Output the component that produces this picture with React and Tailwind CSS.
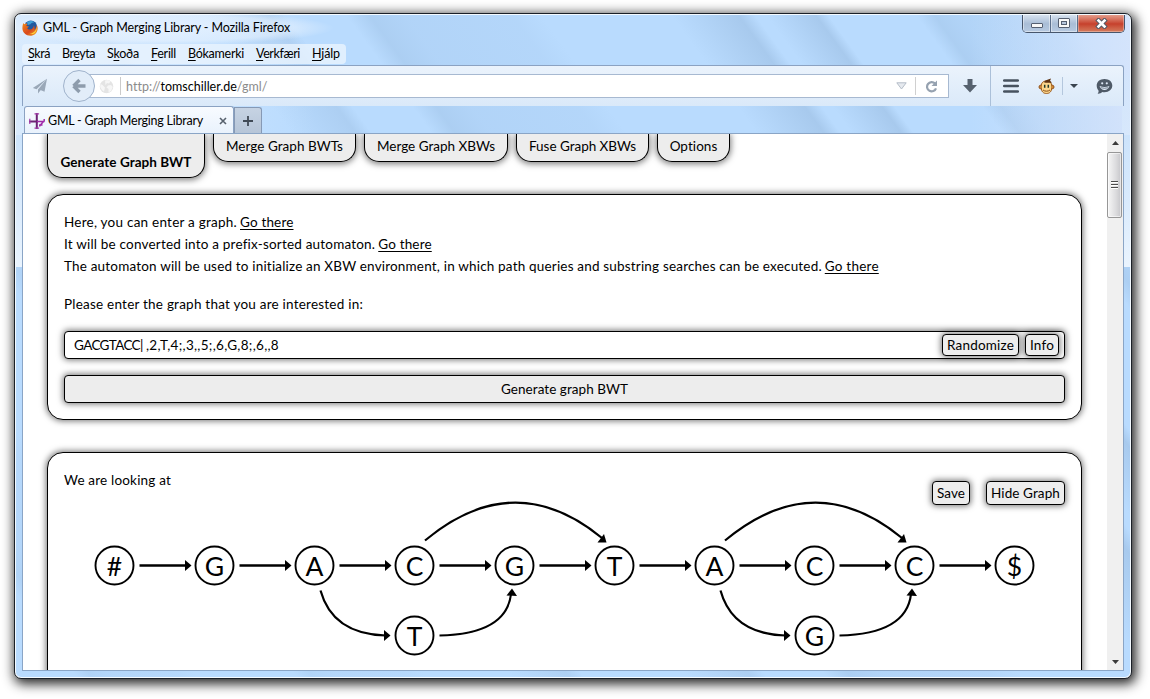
import React, { useLayoutEffect, useRef, useState } from "react";

/* Single line of text tracked to an exact width in pixels. */
function Fit({ w, className = "", children }) {
  const ref = useRef(null);
  const [spacing, setSpacing] = useState(0);
  useLayoutEffect(() => {
    const el = ref.current;
    const natural = el.getBoundingClientRect().width;
    setSpacing((w - natural) / el.textContent.length);
  }, [w]);
  return (
    <span ref={ref} className={"inline-block whitespace-nowrap " + className} style={{ letterSpacing: spacing + "px" }}>
      {children}
    </span>
  );
}

function Glass() {
  return (
    <svg className="absolute inset-0" width="1114" height="662" viewBox="0 0 1114 662">
      <defs>
        <linearGradient id="fadeRight"><stop offset="0" stopColor="#a3c6ea" stopOpacity="0" /><stop offset="0.12" stopColor="#a3c6ea" stopOpacity="0.6" /><stop offset="0.3" stopColor="#a8cbf0" stopOpacity="0.45" /><stop offset="0.85" stopColor="#a8cbf0" stopOpacity="0.3" /><stop offset="1" stopColor="#a8cbf0" stopOpacity="0" /></linearGradient>
        <linearGradient id="fadeLeft"><stop offset="0" stopColor="#a0c2e6" stopOpacity="0" /><stop offset="0.8" stopColor="#a0c2e6" stopOpacity="0.7" /><stop offset="1" stopColor="#a0c2e6" stopOpacity="0" /></linearGradient>
        <linearGradient id="lightLeft"><stop offset="0" stopColor="#e4f0fd" stopOpacity="0.75" /><stop offset="1" stopColor="#e4f0fd" stopOpacity="0" /></linearGradient>
        <linearGradient id="lightRight"><stop offset="0" stopColor="#dbe6fb" stopOpacity="0" /><stop offset="1" stopColor="#dbe6fb" stopOpacity="0.8" /></linearGradient>
        <linearGradient id="side" x2="0" y2="1"><stop offset="0" stopColor="#d2e6fb" stopOpacity="0.5" /><stop offset="1" stopColor="#eaf4fe" /></linearGradient>
        <radialGradient id="titleGlow"><stop offset="0" stopColor="#eef6ff" stopOpacity="0.7" /><stop offset="0.75" stopColor="#eef6ff" stopOpacity="0.5" /><stop offset="1" stopColor="#eef6ff" stopOpacity="0" /></radialGradient>
      </defs>
      <rect width="1114" height="662" fill="#b9dbfe" />
      <g transform="skewX(36)">
        <rect x="-420" width="120" height="662" fill="url(#fadeRight)" opacity="0.7" />
        <rect x="-200" width="130" height="662" fill="url(#fadeRight)" opacity="0.6" />
        <rect x="15" width="72" height="662" fill="url(#fadeLeft)" opacity="0.6" />
        <rect x="190" width="80" height="662" fill="url(#fadeLeft)" opacity="0.7" />
        <rect x="330" width="195" height="662" fill="url(#fadeRight)" />
        <rect x="655" width="84" height="662" fill="url(#fadeLeft)" />
        <rect x="750" width="62" height="662" fill="url(#fadeLeft)" />
        <rect x="900" width="150" height="662" fill="url(#fadeRight)" />
      </g>
      <rect width="300" height="120" fill="url(#lightLeft)" />
      <rect x="954" width="160" height="120" fill="url(#lightRight)" />
      <rect y="60" width="7" height="192" fill="url(#side)" />
      <rect x="1106" y="60" width="8" height="192" fill="url(#side)" />
      <ellipse cx="148" cy="13" rx="170" ry="17" fill="url(#titleGlow)" />
    </svg>
  );
}

function Firefox() {
  return (
    <svg width="16" height="16" viewBox="0 0 16 16">
      <defs>
        <linearGradient id="fox" x2="1" y2="1"><stop offset="0" stopColor="#f08a1c" /><stop offset="0.55" stopColor="#d9481c" /><stop offset="1" stopColor="#f5b52a" /></linearGradient>
      </defs>
      <circle cx="8.8" cy="6.8" r="6.3" fill="#20589f" />
      <path d="M5 2.2c2-1.6 5.4-1.6 7.4.2-2 0-3.4.6-4 1.8L5.8 5z" fill="#3fa0d8" />
      <path d="M1.4 3c.3.6.7 1 1.2 1.2C3.800 3.400 4.500 3.500 5.200 4c.6.4-.6 1-1 1.700.7.5 1.800.3 2.700.7-.3 1-1.500 1.100-1.700 1.900.9 1.700 3.500 1.600 4.900.4 1.200-1 1.700-2 1.700-3.200 1.200 1.500 1 3.500.3 4.500 1.800-.9 2.500-2.800 2.400-5.200 1 1.400 1.300 3 1.100 4.500-.4 3.800-3.500 6.500-7.300 6.500C4 15.800.4 12.500.4 8.300.4 6.400.7 4.500 1.400 3z" fill="url(#fox)" />
      <path d="M14.300 5.500c.8 4-2 7.800-6.500 8.300 5 1.500 8.200-3 6.500-8.300z" fill="#ffd43b" />
    </svg>
  );
}

function WindowButtons() {
  return (
    <div className="flex h-[19px] w-[103px] overflow-hidden rounded-b-[5px] border border-t-0 border-[#47566c] text-white">
      <div className="flex w-[28px] items-center justify-center border-r border-[#5b6f8b] bg-linear-to-b from-[#dbe5f1] from-0% via-[#a9bdd6] via-55% to-[#b7cae2] pt-[4px] shadow-[inset_0_0_0_1px_#ffffff70]">
        <div className="h-[5px] w-[12px] rounded-[1px] border border-[#555f70] bg-[#f8f8f8]" />
      </div>
      <div className="flex w-[27px] items-center justify-center border-r border-[#5b6f8b] bg-linear-to-b from-[#dbe5f1] via-[#a9bdd6] via-55% to-[#b7cae2] shadow-[inset_0_0_0_1px_#ffffff70]">
        <div className="flex h-[10px] w-[12px] items-center justify-center rounded-[1px] border border-[#555f70] bg-[#f8f8f8]">
          <div className="h-[4px] w-[6px] border border-[#555f70] bg-[#b6c6dc]" />
        </div>
      </div>
      <div className="flex flex-1 items-center justify-center bg-linear-to-b from-[#e6a595] from-0% via-[#c6402c] via-55% to-[#d37b5e] shadow-[inset_0_0_0_1px_#ffffff50]">
        <svg width="13" height="11" viewBox="0 0 13 11">
          <path d="M3.500 2.500 9.500 8.500M9.500 2.500 3.500 8.500" stroke="#555a66" strokeWidth="4.600" strokeLinecap="square" />
          <path d="M3.500 2.500 9.500 8.500M9.500 2.500 3.500 8.500" stroke="#fff" strokeWidth="2.600" strokeLinecap="square" />
        </svg>
      </div>
    </div>
  );
}

const menuItems = [
  ["", "S", "krá", 22],
  ["Br", "e", "yta", 33],
  ["S", "k", "oða", 32],
  ["", "F", "erill", 25],
  ["", "B", "ókamerki", 56],
  ["", "V", "erkfæri", 44],
  ["", "H", "jálp", 28],
];

function Toolbar() {
  return (
    <div className="flex h-[41px] items-center rounded-t-[3px] border border-b-0 border-[#8ba2c2] bg-linear-to-b from-[#ebf3fc] to-[#dae9f9]">
      <svg className="ml-[9px]" width="16" height="16" viewBox="0 0 16 16">
        <path d="M15 .8.800 10l3.800 1.200zM15 .8 6 11.500V15.500l2.200-2.800zM15 .8 7.800 11.800l4.700 2z" fill="#9aa8b8" />
      </svg>
      <svg className="relative z-10 ml-[14px]" width="34" height="34" viewBox="0 0 34 34">
        <circle cx="17" cy="17" r="15.500" fill="#e2edf9" stroke="#9fb2cb" />
        <path d="M11.500 17 17.500 11M11.500 17 17.500 23M12 17H23.500" stroke="#8e9cac" strokeWidth="3.400" fill="none" />
      </svg>
      <div className="-ml-[9px] flex h-[24px] w-[862px] items-center border border-[#a7b9d1] bg-white">
        <svg className="ml-[11px]" width="15" height="15" viewBox="0 0 15 15">
          <circle cx="7.500" cy="7.500" r="6.800" fill="#e4e4e4" />
          <path d="M6 1.500 9 1l2.500 1.500L10 4.500 8 4 6.500 6zM1.500 5l2 1L6 8.500 5 12.500 3 11 1.200 8zM9 6.500l3-.5 1.800 2L12 12l-2.500 1.500L9.500 10 7.500 8.500z" fill="#f6f6f6" />
        </svg>
        <div className="ml-[6px] h-[18px] w-px bg-[#cbcbcb]" />
        <Fit w={141} className="ml-[5px] pt-[2px] text-[12.5px] text-[#8b8b8b]">
          http://<span className="text-black">tomschiller.de</span>/gml/
        </Fit>
        <svg className="mr-[8px] ml-auto" width="11" height="8" viewBox="0 0 11 8">
          <path d="M.8.800h9.400L5.500 7z" fill="#e6eaef" stroke="#b5bdc8" />
        </svg>
        <div className="h-[18px] w-px bg-[#d0d0d0]" />
        <svg className="mr-[10px] ml-[9px]" width="13" height="13" viewBox="0 0 13 13">
          <path d="M10 3.600A4.600 4.600 0 1 0 11 8.300" fill="none" stroke="#96a2b0" strokeWidth="2.200" />
          <path d="M12 .5V6H6.500z" fill="#96a2b0" />
        </svg>
      </div>
      <svg className="ml-[14px]" width="14" height="14" viewBox="0 0 14 14">
        <path d="M4.500 0h5v6H14L7 13.500 0 6h4.500z" fill="#56616e" />
      </svg>
      <div className="ml-[13px] h-full w-px bg-[#abc0d9]" />
      <svg className="ml-[12px]" width="16" height="14" viewBox="0 0 16 14">
        <path d="M1.200 1.500H14.800M1.200 7H14.800M1.200 12.500H14.800" stroke="#47525f" strokeWidth="2.500" strokeLinecap="round" />
      </svg>
      <svg className="ml-[19px]" width="17" height="17" viewBox="0 0 17 17">
        <circle cx="2.800" cy="9" r="1.800" fill="#e99a3c" stroke="#8c4d16" />
        <circle cx="14.200" cy="9" r="1.800" fill="#e99a3c" stroke="#8c4d16" />
        <path d="M8.500 3C13 3 14 6 13.800 9.500c-.2 4-2 6-5.300 6s-5.100-2-5.300-6C3 6 4 3 8.500 3z" fill="#fbd68c" stroke="#9c5a1c" />
        <path d="M6 4.200C7 2 10 1.800 13 .6L12 3c1 .4 1.500 1.200 1.600 2C11 4.200 9 5.500 6 4.200z" fill="#5e3312" />
        <path d="M6.700 6.800v3M10.300 6.800v3" stroke="#1f3a2a" strokeWidth="1.500" />
        <path d="M5 12c2 1.600 5 1.600 7 0" stroke="#8c4d16" fill="none" />
      </svg>
      <div className="ml-[7px] h-[18px] w-px bg-[#b4c7dd]" />
      <svg className="ml-[7px]" width="8" height="4" viewBox="0 0 8 4"><path d="M0 0h8L4 4z" fill="#3a444f" /></svg>
      <svg className="ml-[18px]" width="17" height="17" viewBox="0 0 17 17">
        <path d="M8.500 1C13 1 16.300 3.800 16.300 7.600S13 14.300 8.500 14.300c-1 0-1.600-.1-2.300-.3C5 15.200 3.400 15.800 1.500 15.600c.9-.8 1.200-1.700 1.100-2.900C1.300 11.400.7 9.600.7 7.600.7 3.800 4 1 8.500 1z" fill="#4f5a67" />
        <circle cx="6.200" cy="5.300" r="1.100" fill="#dfeaf7" />
        <circle cx="10.800" cy="5.300" r="1.100" fill="#dfeaf7" />
        <path d="M3.600 8q4.900 1.800 9.800 0c-.4 2.300-2.400 4-4.900 4s-4.500-1.700-4.900-4z" fill="#dfeaf7" />
        <path d="M4.800 9.700q3.700 1.200 7.400 0" stroke="#4f5a67" strokeWidth=".7" fill="none" />
      </svg>
    </div>
  );
}

function BrowserTabs() {
  return (
    <div className="flex h-[27px] items-end pl-[2px]">
      <div className="flex h-[27px] w-[210px] items-center rounded-t-[3px] border border-b-0 border-[#8ba2c2] bg-linear-to-b from-[#f8fbff] to-[#e9f2fc] pl-[4px]">
        <svg className="mt-[2px]" width="16" height="16" viewBox="0 0 16 16">
          <path d="M0 8.500H9M7.800 0V16" stroke="#6d2275" strokeWidth="2" />
          <path d="M5.500.8h4.600M5.500 15.200h4.600M.8 5.700V11" stroke="#a33cab" strokeWidth="1.200" />
          <path d="M8 8.500h7.500M15.200 6v2.500M14.500 8.500 11 12.500 10.500 13.500M13.500 12H10" stroke="#a02aa9" strokeWidth="1.500" fill="none" />
        </svg>
        <Fit w={155} className="ml-[3px] pt-[3px] text-[12.5px]">GML - Graph Merging Library</Fit>
        <svg className="mt-[1px] ml-[16px]" width="8" height="8" viewBox="0 0 8 8">
          <path d="M1 1 7 7M7 1 1 7" stroke="#57616d" strokeWidth="1.600" />
        </svg>
      </div>
      <div className="flex h-[26px] w-[28px] items-center justify-center rounded-tr-[3px] border border-b-0 border-[#8699b5] bg-linear-to-b from-[#c6d3e3] to-[#b6c5d8]">
        <svg width="10" height="10" viewBox="0 0 10 10"><path d="M5 0V10M0 5H10" stroke="#404a56" strokeWidth="1.800" /></svg>
      </div>
    </div>
  );
}

const shade = "shadow-[0_0_6px_1px_rgba(0,0,0,0.55)]";

function PageTabs() {
  const tab = "flex h-[28px] justify-center rounded-b-[15px] border border-t-0 border-black bg-[#ededed] text-[13.5px] leading-[22px] shadow-[0_1px_6px_1px_rgba(0,0,0,0.5)] ";
  return (
    <div className="flex h-[60px] items-start gap-2">
      <div className="flex h-[44px] w-[158px] items-end justify-center rounded-b-[15px] border border-t-0 border-black bg-[#ededed] pb-[4px] text-[13.5px] leading-[22px] font-bold shadow-[0_1px_6px_1px_rgba(0,0,0,0.5)]">
        <Fit w={131}>Generate Graph BWT</Fit>
      </div>
      <div className={tab + "w-[143px]"}><Fit w={117} className="mt-[1px]">Merge Graph BWTs</Fit></div>
      <div className={tab + "w-[144px]"}><Fit w={118} className="mt-[1px]">Merge Graph XBWs</Fit></div>
      <div className={tab + "w-[133px]"}><Fit w={107} className="mt-[1px]">Fuse Graph XBWs</Fit></div>
      <div className={tab + "w-[73px]"}><Fit w={48} className="mt-[1px]">Options</Fit></div>
    </div>
  );
}

const mainRow = ["#", "G", "A", "C", "G", "T", "A", "C", "C", "$"];

function Node({ x, y, label }) {
  return (
    <g>
      <circle cx={x} cy={y} r="19" fill="#fff" stroke="#000" strokeWidth="1.900" />
      <text x={x} y={y + 10} textAnchor="middle" fontSize="26.500">{label}</text>
    </g>
  );
}

/* Detour over the main row, anchored at the centre of its first node. */
function Hop({ x }) {
  return (
    <g fill="none" stroke="#000" strokeWidth="2.200">
      <path d={`M${x + 10.500} 71.500Q${x + 100} -3 ${x + 187.500} 69`} />
      <path d={`M${x + 192} 73.500h-9l6.500-8.500z`} fill="#000" stroke="none" />
    </g>
  );
}

/* Detour under the main row. */
function Dip({ x }) {
  return (
    <g fill="none" stroke="#000" strokeWidth="2.200">
      <path d={`M${x + 6} 121.500Q${x + 18} 165 ${x + 71} 166.500`} />
      <path d={`M${x + 76} 166.500l-6.500-5.500v11z`} fill="#000" stroke="none" />
      <path d={`M${x + 125} 166.500Q${x + 192} 165 ${x + 196.500} 125`} />
      <path d={`M${x + 197.500} 119.500l-5.500 7 10.500 .5z`} fill="#000" stroke="none" />
    </g>
  );
}

function Graph() {
  return (
    <svg className="h-[179px] w-full" width="1001" height="179" viewBox="0 0 1001 179" overflow="visible">
      {mainRow.map((label, i) => (
        <g key={i}>
          {i < 9 && (
            <g>
              <path d={`M${75.500 + i * 100} 96.500h48`} stroke="#000" strokeWidth="2.300" />
              <path d={`M${127.500 + i * 100} 96.500l-6.500-5.500v11z`} />
            </g>
          )}
          <Node x={50.500 + i * 100} y={96.500} label={label} />
        </g>
      ))}
      <Hop x={350.500} />
      <Dip x={250.500} />
      <Hop x={650.500} />
      <Dip x={650.500} />
      <Node x={350.500} y={166.500} label="T" />
      <Node x={750.500} y={166.500} label="G" />
    </svg>
  );
}

function Page() {
  const small = "flex items-center justify-center rounded-[4px] border border-black bg-[#ededed] pt-[2px] leading-none " + shade + " ";
  const panel = "w-[1035px] rounded-[16px] border border-black bg-white p-4 " + shade;
  return (
    <main className="h-[536px] w-[1084px] overflow-hidden pl-6 text-[13.5px] leading-[22px] text-black">
      <PageTabs />
      <section className={panel + " h-[226px]"}>
        <div className="flex gap-[3px]"><Fit w={173}>Here, you can enter a graph.</Fit><Fit w={53.500} className="underline underline-offset-2">Go there</Fit></div>
        <div className="flex gap-[3px]"><Fit w={311}>It will be converted into a prefix-sorted automaton.</Fit><Fit w={53.500} className="underline underline-offset-2">Go there</Fit></div>
        <div className="flex gap-[3px]"><Fit w={758}>The automaton will be used to initialize an XBW environment, in which path queries and substring searches can be executed.</Fit><Fit w={54} className="underline underline-offset-2">Go there</Fit></div>
        <div className="mt-4"><Fit w={299}>Please enter the graph that you are interested in:</Fit></div>
        <div className={"mt-4 flex h-[28px] items-center rounded-[4px] border border-black bg-white pr-[5px] pl-[9px] " + shade}>
          <Fit w={66}>GACGTACC</Fit>
          <Fit w={6} className="text-center">|</Fit>
          <Fit w={133} className="mr-auto">,2,T,4;,3,,5;,6,G,8;,6,,8</Fit>
          <div className={small + "mr-[6px] h-[22px] w-[77px]"}><Fit w={67}>Randomize</Fit></div>
          <div className={small + "h-[22px] w-[34px]"}><Fit w={24}>Info</Fit></div>
        </div>
        <div className={"mt-4 flex h-[28px] items-center justify-center rounded-[4px] border border-black bg-[#ededed] " + shade}>
          <Fit w={127}>Generate graph BWT</Fit>
        </div>
      </section>
      <section className={panel + " mt-8 h-[320px]"}>
        <div className="flex h-0 items-start">
          <Fit w={107} className="mr-auto">We are looking at</Fit>
          <div className={small + "mt-[12px] mr-4 h-[24px] w-[38px] shrink-0"}><Fit w={28}>Save</Fit></div>
          <div className={small + "mt-[12px] h-[24px] w-[79px] shrink-0"}><Fit w={69}>Hide Graph</Fit></div>
        </div>
        <Graph />
      </section>
    </main>
  );
}

function Scrollbar() {
  return (
    <div className="flex h-full w-[16px] flex-col items-center bg-[#f0f0f0]">
      <svg className="mt-[7px]" width="7" height="4" viewBox="0 0 7 4"><path d="M3.500 0 7 4H0z" fill="#3b3b3b" /></svg>
      <div className="mt-[7px] mr-[1px] flex h-[66px] w-[15px] flex-col items-center justify-center gap-[1px] rounded-[2px] border border-[#979797] bg-linear-to-r from-[#f6f6f6] via-[#dcdcde] via-60% to-[#c6c6ca] shadow-[inset_0_0_0_1px_#ffffff90]">
        <div className="h-[2px] w-[7px] border-b border-white bg-[#4c4c4c]" />
        <div className="h-[2px] w-[7px] border-b border-white bg-[#4c4c4c]" />
        <div className="h-[2px] w-[7px] border-b border-white bg-[#4c4c4c]" />
      </div>
      <svg className="mt-auto mb-[6px]" width="7" height="4" viewBox="0 0 7 4"><path d="M0 0H7L3.500 4z" fill="#3b3b3b" /></svg>
    </div>
  );
}

export default function App() {
  return (
    <div className="h-[699px] w-[1150px] overflow-hidden bg-white pt-[13px] pl-[14px] font-['Lato','Noto_Sans',sans-serif] text-black">
      <div className="h-[666px] w-[1118px] rounded-[7px] border border-[#1b2028] bg-[#f4faff] p-px shadow-[2px_3px_12px_2px_rgba(0,0,0,0.85)]">
        <div className="relative h-full w-full overflow-hidden rounded-[5px]">
          <Glass />
          <div className="relative flex h-full flex-col pr-[6px] pl-[6px]">
            <header className="flex h-[29px] items-start">
              <div className="mt-[5px] flex items-center gap-[5px]">
                <Firefox />
                <Fit w={247} className="text-[12.5px] leading-[16px]">GML - Graph Merging Library - Mozilla Firefox</Fit>
              </div>
              <div className="-mt-px -mr-[1px] ml-auto"><WindowButtons /></div>
            </header>
            <nav className="flex h-[20px] w-[324px] items-center gap-3 rounded-[4px] bg-[#eaf4fe]/80 pl-[6px] text-[12.5px] leading-[18px]">
              {menuItems.map(([a, b, c, w]) => (
                <Fit key={b + c} w={w}>{a}<span className="underline underline-offset-2">{b}</span>{c}</Fit>
              ))}
            </nav>
            <div className="mt-[1px] w-[1102px]"><Toolbar /></div>
            <BrowserTabs />
            <div className="flex h-[538px] w-[1102px] border border-[#8aa5c6] bg-white">
              <Page />
              <Scrollbar />
            </div>
          </div>
        </div>
      </div>
    </div>
  );
}
